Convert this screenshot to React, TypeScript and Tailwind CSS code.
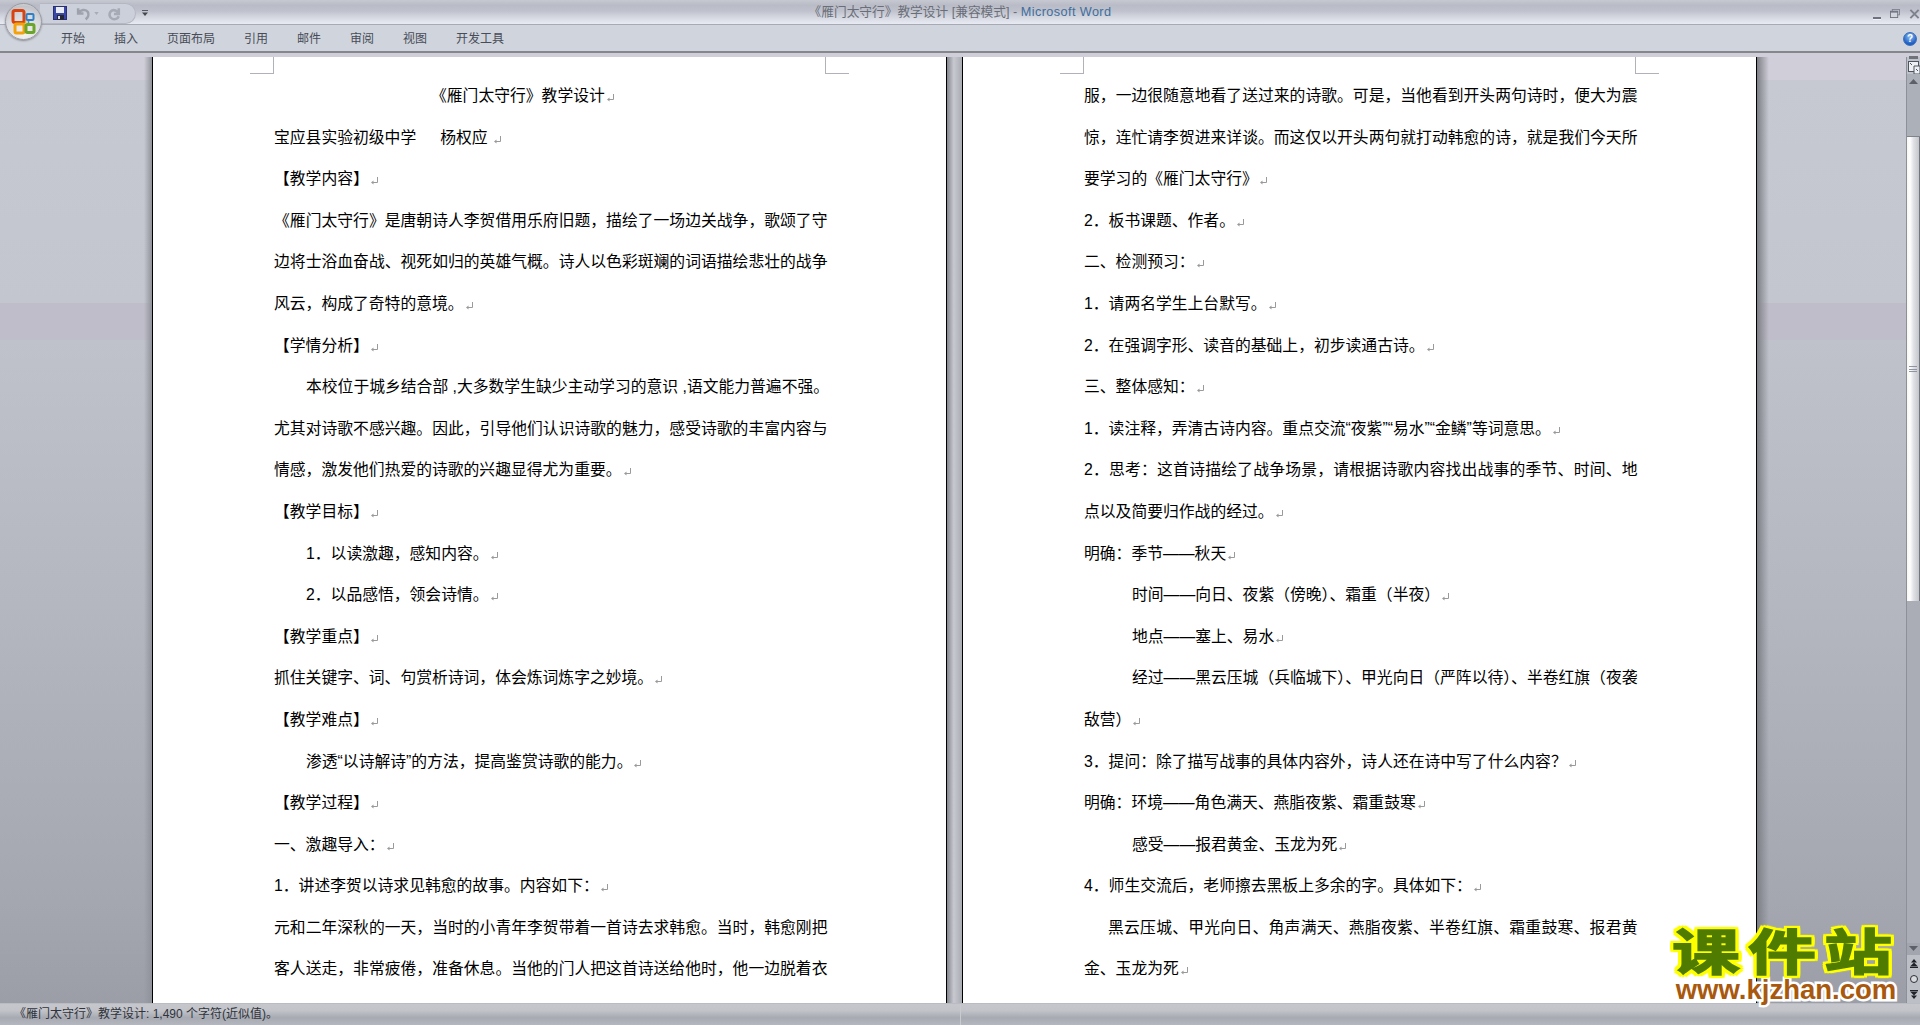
const tabs = ["开始", "插入", "页面布局", "引用", "邮件", "审阅", "视图", "开发工具"];

type Line = { t: string; pad?: string; full?: boolean };

const leftPage: Line[] = [
  { t: "《雁门太守行》教学设计", pad: "pl-[157px]" },
  { t: "宝应县实验初级中学" },
  { t: "【教学内容】" },
  { t: "《雁门太守行》是唐朝诗人李贺借用乐府旧题，描绘了一场边关战争，歌颂了守", full: true },
  { t: "边将士浴血奋战、视死如归的英雄气概。诗人以色彩斑斓的词语描绘悲壮的战争", full: true },
  { t: "风云，构成了奇特的意境。" },
  { t: "【学情分析】" },
  { t: "本校位于城乡结合部 ,大多数学生缺少主动学习的意识 ,语文能力普遍不强。", pad: "pl-8", full: true },
  { t: "尤其对诗歌不感兴趣。因此，引导他们认识诗歌的魅力，感受诗歌的丰富内容与", full: true },
  { t: "情感，激发他们热爱的诗歌的兴趣显得尤为重要。" },
  { t: "【教学目标】" },
  { t: "1．以读激趣，感知内容。", pad: "pl-8" },
  { t: "2．以品感悟，领会诗情。", pad: "pl-8" },
  { t: "【教学重点】" },
  { t: "抓住关键字、词、句赏析诗词，体会炼词炼字之妙境。" },
  { t: "【教学难点】" },
  { t: "渗透“以诗解诗”的方法，提高鉴赏诗歌的能力。", pad: "pl-8" },
  { t: "【教学过程】" },
  { t: "一、激趣导入：" },
  { t: "1．讲述李贺以诗求见韩愈的故事。内容如下：" },
  { t: "元和二年深秋的一天，当时的小青年李贺带着一首诗去求韩愈。当时，韩愈刚把", full: true },
  { t: "客人送走，非常疲倦，准备休息。当他的门人把这首诗送给他时，他一边脱着衣", full: true },
];

const rightPage: Line[] = [
  { t: "服，一边很随意地看了送过来的诗歌。可是，当他看到开头两句诗时，便大为震", full: true },
  { t: "惊，连忙请李贺进来详谈。而这仅以开头两句就打动韩愈的诗，就是我们今天所", full: true },
  { t: "要学习的《雁门太守行》" },
  { t: "2．板书课题、作者。" },
  { t: "二、检测预习：" },
  { t: "1．请两名学生上台默写。" },
  { t: "2．在强调字形、读音的基础上，初步读通古诗。" },
  { t: "三、整体感知：" },
  { t: "1．读注释，弄清古诗内容。重点交流“夜紫”“易水”“金鳞”等词意思。" },
  { t: "2．思考：这首诗描绘了战争场景，请根据诗歌内容找出战事的季节、时间、地", full: true },
  { t: "点以及简要归作战的经过。" },
  { t: "明确：季节——秋天" },
  { t: "时间——向日、夜紫（傍晚）、霜重（半夜）", pad: "pl-12" },
  { t: "地点——塞上、易水", pad: "pl-12" },
  { t: "经过——黑云压城（兵临城下）、甲光向日（严阵以待）、半卷红旗（夜袭", pad: "pl-12", full: true },
  { t: "敌营）" },
  { t: "3．提问：除了描写战事的具体内容外，诗人还在诗中写了什么内容？" },
  { t: "明确：环境——角色满天、燕脂夜紫、霜重鼓寒" },
  { t: "感受——报君黄金、玉龙为死", pad: "pl-12" },
  { t: "4．师生交流后，老师擦去黑板上多余的字。具体如下：" },
  { t: "黑云压城、甲光向日、角声满天、燕脂夜紫、半卷红旗、霜重鼓寒、报君黄", pad: "pl-6", full: true },
  { t: "金、玉龙为死" },
];

function ParaMark() {
  return (
    <svg viewBox="0 0 9 10" className="inline-block w-[9px] h-[10px] ml-px align-[-2px]">
      <path d="M7.5 1v5.5H2" fill="none" stroke="#9a9a9a" strokeWidth="1" />
      <path d="M3.5 4.5 1 6.5l2.5 2z" fill="#9a9a9a" />
    </svg>
  );
}

function DocLine({ line }: { line: Line }) {
  return (
    <div
      className={`whitespace-nowrap ${line.pad ?? ""} ${line.full ? "text-justify [text-align-last:justify]" : ""}`}
    >
      {line.t}
      {line.t === "宝应县实验初级中学" && <span className="ml-6">杨权应 </span>}
      {!line.full && <ParaMark />}
    </div>
  );
}

function CropMark({ side }: { side: "left" | "right" }) {
  return side === "left" ? (
    <div className="absolute top-0 left-[97px] w-6 h-[17px] border-r border-b border-[#b1b1b9]" />
  ) : (
    <div className="absolute top-0 right-[97px] w-6 h-[17px] border-l border-b border-[#b1b1b9]" />
  );
}

function Page({ lines }: { lines: Line[] }) {
  return (
    <div className="relative w-[795px] shrink-0 bg-white border-x border-black pl-[121px] pt-[18px] overflow-hidden">
      <CropMark side="left" />
      <CropMark side="right" />
      <div className="w-[553.5px] text-[15.8px] leading-[41.6px] text-black">
        {lines.map((l, i) => (
          <DocLine key={i} line={l} />
        ))}
      </div>
    </div>
  );
}

function OfficeButton() {
  return (
    <div className="absolute left-[5px] top-[3px] w-[37px] h-[37px] rounded-full border border-[#9a9ca4] bg-[radial-gradient(circle_at_50%_85%,#f4f4f4_0%,#d8d9dd_55%,#c2c3c8_80%,#f2f2f4_100%)] shadow-[0_1px_2px_#8a8c94] flex items-center justify-center">
      <svg viewBox="0 0 26 26" className="w-[26px] h-[26px]">
        <rect x="2" y="1.5" width="11" height="12" rx="2" fill="none" stroke="#d8430f" strokeWidth="3" />
        <rect x="15.5" y="5" width="7" height="6" rx="1" fill="none" stroke="#2f7fc8" strokeWidth="2" />
        <rect x="4" y="15" width="9" height="9" rx="1.5" fill="none" stroke="#f3a20d" strokeWidth="3" />
        <rect x="15" y="15.5" width="8" height="8" rx="1.5" fill="none" stroke="#6aa52a" strokeWidth="3" />
        <circle cx="14.5" cy="13" r="1" fill="#e8b020" />
        <circle cx="17.5" cy="13" r="1" fill="#3d8fd0" />
      </svg>
    </div>
  );
}

function QuickAccess() {
  return (
    <div className="flex items-center">
      <div className="ml-[40px] mt-[1px] h-[21px] w-[96px] rounded-r-full border border-l-0 border-[#b5b8c2] bg-[#ccd0da] flex items-center pl-[13px]">
        <svg viewBox="0 0 14 14" className="w-[14px] h-[14px]">
          <rect x="0.5" y="0.5" width="13" height="13" fill="#3a46a8" stroke="#2a2f70" />
          <rect x="3" y="1" width="8" height="6" fill="#e8ecf6" />
          <rect x="4" y="9" width="7" height="4.5" fill="#26262e" />
          <rect x="5" y="10" width="2" height="3" fill="#d8d8e0" />
        </svg>
        <svg viewBox="0 0 14 14" className="ml-[9px] w-[15px] h-[15px]">
          <path d="M2 2v5h5M2.5 6.5C4 3.5 9 2.5 11 5.5c1.2 2 .6 5-2 7" fill="none" stroke="#9ea2ac" strokeWidth="2.4" />
        </svg>
        <svg viewBox="0 0 6 4" className="ml-[3px] w-[5px] h-[3px]">
          <path d="M0 0h6L3 4z" fill="#a8acb6" />
        </svg>
        <svg viewBox="0 0 14 14" className="ml-[8px] w-[15px] h-[15px]">
          <path d="M11 2v5.5H6.5M11 7.5c-.8-3-5-5-7.5-2.5-2 2.2-1.4 6 1.5 7 2.3.8 5 0 6-2.5" fill="none" stroke="#a6aab4" strokeWidth="2.4" />
        </svg>
      </div>
      <svg viewBox="0 0 7 7" className="ml-[6px] mt-[1px] w-[6px] h-[6px]">
        <rect x="0" y="0" width="7" height="1" fill="#45474f" />
        <path d="M0 3h7L3.5 7z" fill="#45474f" />
      </svg>
    </div>
  );
}

function WindowControls() {
  return (
    <div className="flex items-center justify-end gap-[9px] pt-[2px]">
      <div className="mt-[8px] w-[8px] h-[2px] bg-[#6d727e] shadow-[0_1px_0_#f2f3f7]" />
      <svg viewBox="0 0 11 10" className="w-[10px] h-[9px]">
        <rect x="2.5" y="0.5" width="8" height="6" fill="none" stroke="#7d828e" />
        <rect x="0.5" y="2.5" width="8" height="7" fill="#d3d5dd" stroke="#6d727e" />
        <rect x="0.5" y="2.5" width="8" height="1.5" fill="#6d727e" />
      </svg>
      <svg viewBox="0 0 12 10" className="w-[11px] h-[10px]">
        <path d="M1.5 .5l9 9M10.5 .5l-9 9" stroke="#7d828e" strokeWidth="2.2" />
      </svg>
    </div>
  );
}

function HelpIcon() {
  return (
    <div className="w-[14px] h-[14px] rounded-full bg-[radial-gradient(circle_at_50%_30%,#8fc0f4,#1f5fc4_70%)] border border-[#3a6fb8] text-white text-[10px] leading-[12px] font-bold text-center">
      ?
    </div>
  );
}

function Scrollbar() {
  return (
    <div className="w-[14px] shrink-0 flex flex-col items-center bg-[linear-gradient(#bfc2ca,#a5a8b1)] border-l border-[#8c9098]">
      <div className="mt-[-1px] w-[9px] h-[3px] bg-[#707279]" />
      <svg viewBox="0 0 12 13" className="mt-[2px] w-[12px] h-[13px]">
        <rect x="0.5" y="0.5" width="10" height="10" fill="#eef0f4" stroke="#4f5560" />
        <path d="M6 5h6v8H6z" fill="#eef0f4" stroke="#4f5560" />
        <path d="M2 2l2 2M8 8l2 2" stroke="#50555f" />
      </svg>
      <div className="w-full h-[63px] bg-[#acb0b8] flex justify-center pt-[5px] border-b border-[#7f838b]">
        <svg viewBox="0 0 9 5" className="w-[9px] h-[5px]">
          <path d="M4.5 0 9 5H0z" fill="#5d6069" />
        </svg>
      </div>
      <div className="w-full h-[464px] flex items-center justify-center bg-[linear-gradient(90deg,#f7f6ef_0%,#ffffff_25%,#e0e1e6_55%,#c4c6cd_100%)] border-r border-[#73767e]">
        <div className="w-[8px] h-[6px] border-y border-[#9094a0] relative after:absolute after:left-0 after:top-[1.5px] after:w-full after:h-px after:bg-[#9094a0]" />
      </div>
      <div className="w-full flex-1 bg-[#aaadb6]" />
      <div className="w-full h-[12px] bg-[#a2a5ae] flex justify-center pt-[3px]">
        <svg viewBox="0 0 9 5" className="w-[9px] h-[5px]">
          <path d="M0 0h9L4.5 5z" fill="#5d6069" />
        </svg>
      </div>
      <div className="w-full h-[48px] bg-[#bcbfc6] flex flex-col items-center gap-[7px] pt-[4px]">
        <svg viewBox="0 0 8 9" className="w-[8px] h-[9px]">
          <path d="M4 0 7 3.5H1zM4 3.5 8 7.5H0zM0 8h8v1H0z" fill="#20222a" />
        </svg>
        <div className="w-[8px] h-[8px] rounded-full border border-[#2c2e36] bg-[#d8dade]" />
        <svg viewBox="0 0 8 9" className="w-[8px] h-[9px]">
          <path d="M0 0h8v1H0zM0 1.5h8L4 5.5zM1 5.5h6L4 9z" fill="#20222a" />
        </svg>
      </div>
    </div>
  );
}

function Watermark() {
  return (
    <div className="absolute right-[18px] bottom-[20px] w-[232px] pointer-events-none text-center">
      <div className="h-[44px] text-[68px] leading-[44px] font-bold tracking-[8px] text-[#4f7b00] scale-y-[0.72] [-webkit-text-stroke:2px_#4f7b00] [filter:drop-shadow(3px_0_0_#ffff00)_drop-shadow(-3px_0_0_#ffff00)_drop-shadow(0_3px_0_#ffff00)_drop-shadow(0_-3px_0_#ffff00)] whitespace-nowrap">
        课件站
      </div>
      <div className="font-['Liberation_Sans',sans-serif] text-[27.5px] leading-[30px] font-bold text-[#a8590e] [-webkit-text-stroke:5px_#ffffff] [paint-order:stroke_fill] whitespace-nowrap">
        www.kjzhan.com
      </div>
    </div>
  );
}

export default function App() {
  return (
    <div
      lang="zh-CN"
      className="relative w-screen h-screen overflow-hidden flex flex-col font-['Liberation_Sans','Noto_Sans_CJK_SC',sans-serif]"
    >
      <div className="h-[25px] shrink-0 grid grid-cols-[1fr_auto_1fr] border-b border-[#a7aab2] bg-[linear-gradient(#c6c9d1_0%,#b9bcc6_22%,#bfc2cc_45%,#d3d6df_70%,#e8ebf3_100%)]">
        <QuickAccess />
        <div className="text-[12.7px] leading-[25px] text-[#6a6e79]">
          《雁门太守行》教学设计 [兼容模式] - <span className="text-[#3f6e9e] tracking-[0.4px]">Microsoft Word</span>
        </div>
        <WindowControls />
      </div>
      <div className="h-[28px] shrink-0 flex items-center pl-[61px] pr-[3px] pt-[2px] gap-[29px] border-b-2 border-[#85878c] bg-[#d0d4dc] text-[12px] text-[#474c58]">
        {tabs.map((t) => (
          <span key={t}>{t}</span>
        ))}
        <div className="ml-auto">
          <HelpIcon />
        </div>
      </div>
      <div className="flex-1 min-h-0 flex pt-[4px] bg-[linear-gradient(#d0ced8_0px,#d0ced8_27px,#c6c9d1_27px,#c3c6ce_250px,#bfbdc9_250px,#bfbdc9_287px,#bfc2ca_287px,#b4b7c0_550px,#a4a7b0_850px,#9b9ea7_100%)]">
        <div className="w-[152px] shrink-0 bg-[linear-gradient(90deg,transparent_144px,#8f9299_152px)]" />
        <Page lines={leftPage} />
        <div className="w-[15px] shrink-0 bg-[linear-gradient(90deg,#85878e_0%,#c8c9d0_45%,#a9abb3_100%)]" />
        <Page lines={rightPage} />
        <div className="flex-1 flex">
          <div className="w-[12px] bg-[linear-gradient(90deg,#7d7f86,transparent)]" />
          <div className="flex-1" />
        </div>
        <Scrollbar />
      </div>
      <div className="h-[22px] shrink-0 flex border-t border-[#b9bcc3] bg-[linear-gradient(#c5c7cd_0%,#c2c4ca_30%,#a7aab2_65%,#b4b7be_100%)] text-[12px] leading-[21px] text-[#30333b]">
        <div className="w-[961px] pl-[14px] border-r border-[#c9cbd1]">《雁门太守行》教学设计: 1,490 个字符(近似值)。</div>
      </div>
      <OfficeButton />
      <Watermark />
    </div>
  );
}
